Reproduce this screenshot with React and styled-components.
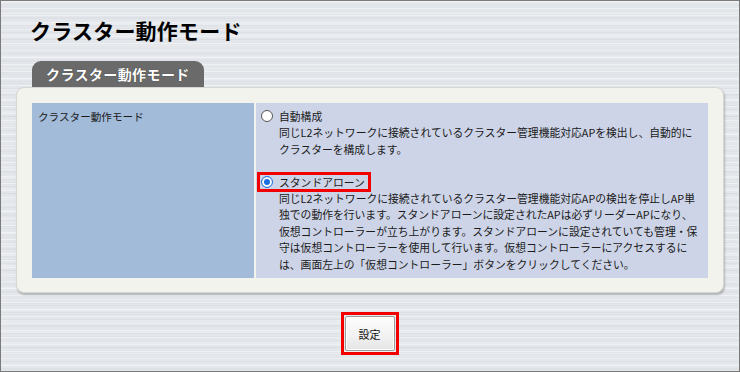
import styled, { createGlobalStyle } from 'styled-components'

const GlobalStyle = createGlobalStyle`
  html, body {
    margin: 0;
    padding: 0;
  }
  body {
    font-family: "Noto Sans CJK JP", "Noto Sans", sans-serif;
    color: #111;
  }
`

const Page = styled.div`
  box-sizing: border-box;
  width: 740px;
  height: 372px;
  border: 1px solid #7a7a7a;
  background-color: #e3e6ea;
  background-image:
    repeating-linear-gradient(180deg, rgba(255, 255, 255, 0.4) 0 1px, transparent 1px 3px, rgba(120, 125, 135, 0.05) 3px 4px, transparent 4px 7px),
    repeating-linear-gradient(180deg, rgba(255, 255, 255, 0.22) 0 2px, transparent 2px 5px, rgba(110, 115, 125, 0.04) 5px 6px, transparent 6px 11px);
  padding: 15px 15px 0 15px;
`

const Title = styled.h1`
  margin: 0 0 0 14px;
  font-size: 21px;
  font-weight: 700;
  line-height: 28px;
  color: #000;
  letter-spacing: 0.2px;
`

const Tab = styled.div`
  display: inline-block;
  margin: 17px 0 0 16px;
  height: 26px;
  padding: 0 14px;
  background: #6a6a6a;
  border-radius: 9px 9px 0 0;
  color: #fff;
  font-size: 14px;
  font-weight: 700;
  line-height: 27px;
  letter-spacing: 0.4px;
  text-shadow: 0 0 1px rgba(0, 0, 0, 0.6);
`

const Panel = styled.div`
  box-sizing: border-box;
  width: 708px;
  height: 206px;
  padding: 15px 15px 0 15px;
  background: #f3f3ed;
  border: 1px solid #d6d6d2;
  border-radius: 8px;
  box-shadow: 1px 2px 2px rgba(0, 0, 0, 0.22);
`

const Table = styled.div`
  display: grid;
  grid-template-columns: 222px 1fr;
  column-gap: 2px;
  height: 175px;
`

const HeadCell = styled.div`
  background: #a2bbd9;
  padding: 6px 6px;
  font-size: 10.6px;
  line-height: 16.4px;
  color: #1a1a1a;
`

const ValueCell = styled.div`
  background: #cdd4e7;
  padding: 5px 8px 5px 5px;
  font-size: 10.8px;
  line-height: 16.4px;
  color: #1a1a1a;
`

const Option = styled.div`
  & + & {
    margin-top: 16.4px;
  }
`

const OptionRow = styled.label`
  display: flex;
  align-items: center;
  height: 16.4px;
`

const Highlight = styled.span`
  box-sizing: border-box;
  display: inline-flex;
  align-items: center;
  height: 20px;
  margin-left: ${({ $on }) => ($on ? '-4px' : '0')};
  padding: ${({ $on }) => ($on ? '0 3px 0 1px' : '0')};
  border: ${({ $on }) => ($on ? '3px solid #f20000' : 'none')};
`

const Radio = styled.span`
  box-sizing: border-box;
  display: inline-block;
  width: 12px;
  height: 12px;
  margin-right: 6px;
  border-radius: 50%;
  background: #fff;
  border: 1px solid ${({ $checked }) => ($checked ? '#1a6fe0' : '#555')};
  box-shadow: ${({ $checked }) => ($checked ? 'inset 0 0 0 2px #fff, inset 0 0 0 6px #1a6fe0' : 'none')};
`

const Description = styled.p`
  margin: 0;
  padding-left: 18px;
  white-space: nowrap;
`

const Actions = styled.div`
  display: flex;
  justify-content: center;
  margin-top: 19px;
  padding-right: 1px;
`

const ButtonFrame = styled.div`
  padding: 1px;
  border: 3px solid #f20000;
`

const Button = styled.button`
  box-sizing: border-box;
  width: 50px;
  height: 35px;
  border: 1px solid #9a9a9a;
  border-radius: 2px;
  background: linear-gradient(180deg, #fdfdfd 0%, #f1f1f1 60%, #e4e4e4 100%);
  box-shadow: inset 0 0 0 1px #fff;
  font-family: "Noto Sans CJK JP", sans-serif;
  font-size: 11px;
  color: #111;
  padding: 0;
  cursor: pointer;
`

export default function App() {
  return (
    <>
      <GlobalStyle />
      <Page>
        <Title>クラスター動作モード</Title>
        <Tab>クラスター動作モード</Tab>
        <Panel>
          <Table>
            <HeadCell>クラスター動作モード</HeadCell>
            <ValueCell>
              <Option>
                <OptionRow>
                  <Highlight>
                    <Radio />
                    自動構成
                  </Highlight>
                </OptionRow>
                <Description>
                  同じL2ネットワークに接続されているクラスター管理機能対応APを検出し、自動的に
                  <br />
                  クラスターを構成します。
                </Description>
              </Option>
              <Option>
                <OptionRow>
                  <Highlight $on>
                    <Radio $checked />
                    スタンドアローン
                  </Highlight>
                </OptionRow>
                <Description>
                  同じL2ネットワークに接続されているクラスター管理機能対応APの検出を停止しAP単
                  <br />
                  独での動作を行います。スタンドアローンに設定されたAPは必ずリーダーAPになり、
                  <br />
                  仮想コントローラーが立ち上がります。スタンドアローンに設定されていても管理・保
                  <br />
                  守は仮想コントローラーを使用して行います。仮想コントローラーにアクセスするに
                  <br />
                  は、画面左上の「仮想コントローラー」ボタンをクリックしてください。
                </Description>
              </Option>
            </ValueCell>
          </Table>
        </Panel>
        <Actions>
          <ButtonFrame>
            <Button type="button">設定</Button>
          </ButtonFrame>
        </Actions>
      </Page>
    </>
  )
}
